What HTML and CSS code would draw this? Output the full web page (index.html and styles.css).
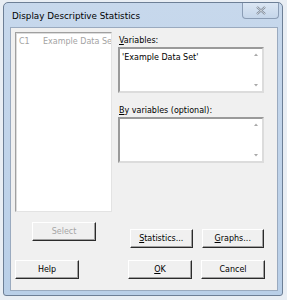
FILE: index.html
```html
<!DOCTYPE html>
<html>
<head>
<meta charset="utf-8">
<link rel="stylesheet" href="styles.css">
</head>
<body>
<div class="window">
  <div class="titlebar">
    <span class="title">Display Descriptive Statistics</span>
    <span class="close">
      <svg width="10" height="9" viewBox="0 0 10 9"><path d="M1 1 L9 8 M9 1 L1 8" stroke="#7a8594" stroke-width="2.2" fill="none"/><path d="M1 1 L9 8 M9 1 L1 8" stroke="#e8edf3" stroke-width="0.8" fill="none"/></svg>
    </span>
  </div>
  <div class="client">
    <div class="top">
      <div class="leftcol">
        <div class="listbox"><span class="col">C1</span><span class="name">Example Data Set</span></div>
        <button class="btn disabled select">Select</button>
      </div>
      <div class="rightcol">
        <div class="label"><u>V</u>ariables:</div>
        <div class="textbox">
          <span class="val">'Example Data Set'</span>
          <span class="arrows"><svg width="6" height="40" viewBox="0 0 6 40"><path d="M1 6 L3 3.5 L5 6 Z" fill="#a8a8a8"/><path d="M1 34 L3 36.5 L5 34 Z" fill="#a8a8a8"/></svg></span>
        </div>
        <div class="label second"><u>B</u>y variables (optional):</div>
        <div class="textbox">
          <span class="val"></span>
          <span class="arrows"><svg width="6" height="40" viewBox="0 0 6 40"><path d="M1 6 L3 3.5 L5 6 Z" fill="#a8a8a8"/><path d="M1 34 L3 36.5 L5 34 Z" fill="#a8a8a8"/></svg></span>
        </div>
        <div class="btnrow mid">
          <button class="btn"><u>S</u>tatistics...</button>
          <button class="btn"><u>G</u>raphs...</button>
        </div>
      </div>
    </div>
    <div class="bottom">
      <button class="btn">Help</button>
      <div class="btnrow">
        <button class="btn"><u>O</u>K</button>
        <button class="btn">Cancel</button>
      </div>
    </div>
  </div>
</div>
</body>
</html>
```
FILE: styles.css
```css
html, body {
  margin: 0;
  padding: 0;
  background: #e9eef4;
  width: 287px;
  height: 300px;
  overflow: hidden;
  font-family: "DejaVu Sans", sans-serif;
}
.window {
  margin: 2px 0 0 3px;
  width: 280px;
  height: 294px;
  border: 1px solid #6d7f96;
  border-radius: 5px 5px 3px 3px;
  background: linear-gradient(#c7d8ec, #b9cfe8);
  display: flex;
  flex-direction: column;
  box-sizing: border-box;
  padding: 0 4px 4px 6px;
}
.titlebar {
  height: 24px;
  display: flex;
  align-items: center;
  justify-content: space-between;
  flex: none;
}
.title {
  font-size: 8.8px;
  color: #000;
  padding-left: 2px;
  padding-top: 1px;
}
.close {
  align-self: flex-start;
  width: 37px;
  height: 16px;
  margin-right: -1px;
  box-sizing: border-box;
  border: 1px solid #8b9db5;
  border-top: none;
  border-radius: 0 0 4px 4px;
  background: linear-gradient(#dbe6f3, #c5d6ea);
  display: flex;
  align-items: center;
  justify-content: center;
}
.client {
  flex: 1;
  background: #f0f0f0;
  border: 1px solid #9aaabf;
  padding: 4px 0 0 4px;
  display: flex;
  flex-direction: column;
}
.top {
  display: flex;
}
.leftcol {
  width: 97px;
  display: flex;
  flex-direction: column;
}
.listbox {
  height: 180px;
  box-sizing: border-box;
  background: #fff;
  border: 1px solid;
  border-color: #a0a0a0 #e3e3e3 #e3e3e3 #a0a0a0;
  box-shadow: inset 1px 1px 0 #dcdcdc;
  font-size: 8px;
  color: #a3a3a3;
  padding: 4px 0 0 3px;
  white-space: nowrap;
  overflow: hidden;
}
.listbox .col {
  display: inline-block;
  width: 24px;
}
.btn {
  font-family: "DejaVu Sans", sans-serif;
  font-size: 8px;
  color: #000;
  background: #f0f0f0;
  width: 64px;
  height: 19px;
  padding: 0;
  box-sizing: border-box;
  border: 1px solid;
  border-color: #ffffff #2b2b2b #2b2b2b #ffffff;
  box-shadow: inset -1px -1px 0 #a0a0a0;
}
.btn.disabled {
  color: #a6a6a6;
}
.select {
  margin: 10px 0 0 17px;
}
.rightcol {
  margin-left: 6px;
  width: 146px;
  display: flex;
  flex-direction: column;
}
.label {
  font-size: 8px;
  color: #000;
  height: 11px;
  margin-top: 4px;
  padding-left: 1px;
}
.label.second {
  margin-top: 13px;
}
.textbox {
  height: 46px;
  box-sizing: border-box;
  background: #fff;
  border: 2px solid;
  border-color: #9a9a9a #dcdcdc #dcdcdc #9a9a9a;
  display: flex;
  justify-content: space-between;
}
.textbox .val {
  font-size: 8px;
  padding: 4px 0 0 2px;
}
.arrows {
  width: 6px;
  margin-right: 3px;
  display: flex;
  align-items: center;
}
.btnrow {
  display: flex;
  gap: 9px;
}
.btnrow.mid {
  margin-top: 66px;
  margin-left: 12px;
}
.bottom {
  display: flex;
  justify-content: space-between;
  margin-top: 12px;
  padding-right: 12px;
}
```
